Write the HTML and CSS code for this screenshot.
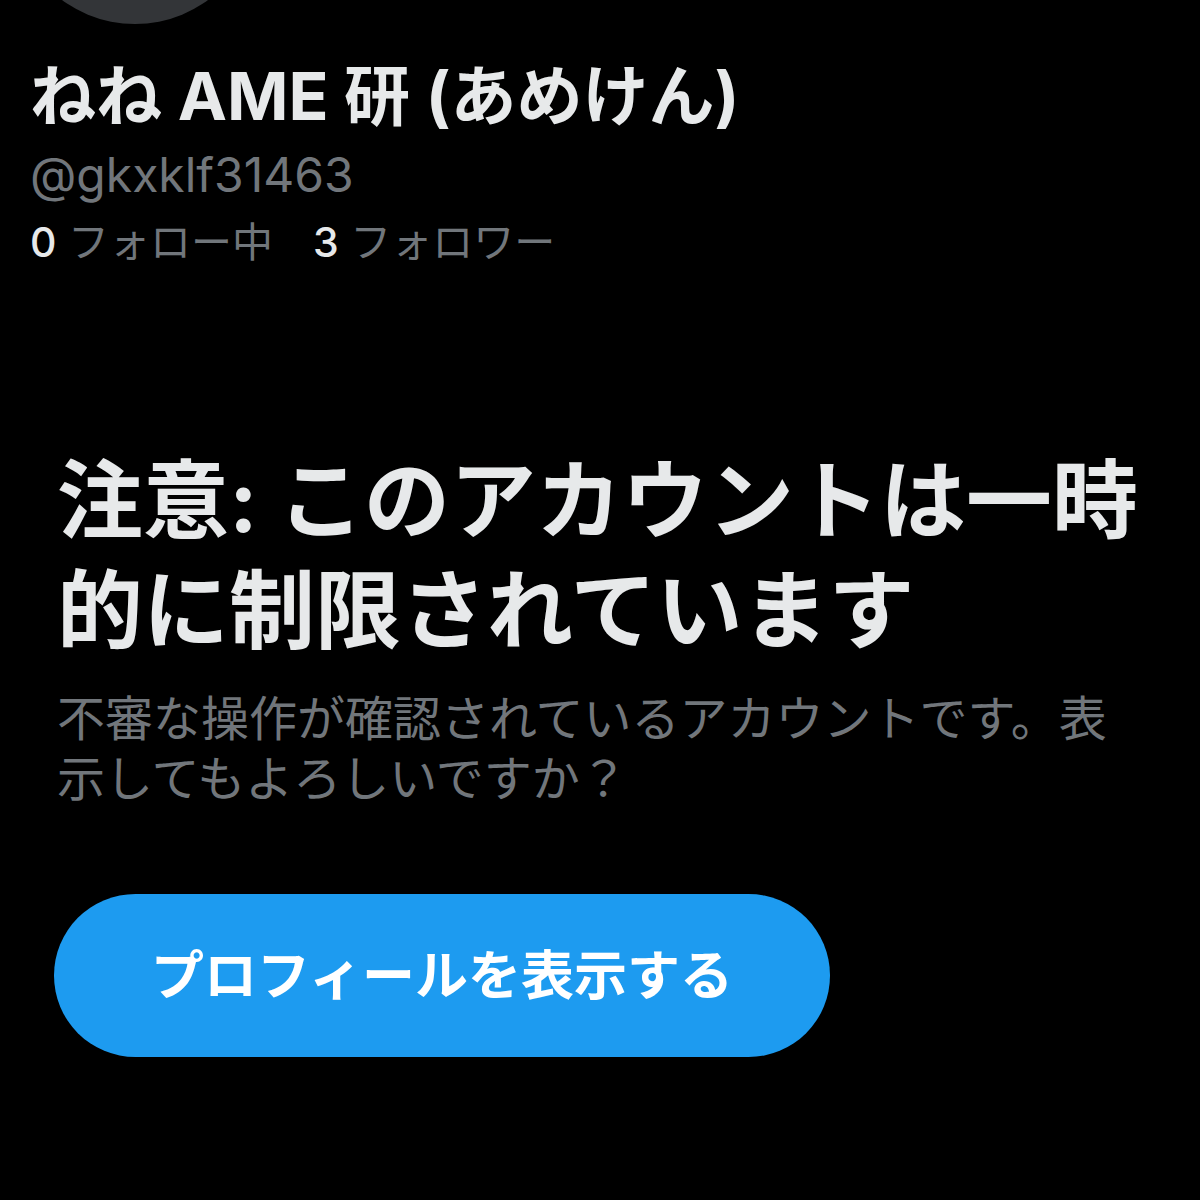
FILE: index.html
```html
<!DOCTYPE html>
<html lang="ja">
<head>
<meta charset="utf-8">
<link rel="stylesheet" href="styles.css">
</head>
<body>
<div class="page">
  <div class="avatar"></div>
  <div class="profile">
    <div class="name">ねね AME 研 (あめけん)</div>
    <div class="handle">@gkxklf31463</div>
    <div class="counts">
      <span class="count"><b>0</b> フォロー中</span>
      <span class="count"><b>3</b> フォロワー</span>
    </div>
  </div>
  <div class="notice">
    <h1 class="title">注意: このアカウントは一時<br>的に制限されています</h1>
    <p class="desc">不審な操作が確認されているアカウントです。表<br>示してもよろしいですか？</p>
    <button class="btn">プロフィールを表示する</button>
  </div>
</div>
</body>
</html>
```

FILE: styles.css
```css
html, body {
  margin: 0;
  padding: 0;
  background: #000;
}
body {
  width: 1200px;
  height: 1200px;
  overflow: hidden;
  font-family: "Inter", "Noto Sans CJK JP", sans-serif;
  color: #e7e9ea;
}
.page {
  display: flex;
  flex-direction: column;
}
.avatar {
  width: 246px;
  height: 246px;
  border-radius: 50%;
  background: #333538;
  margin: -222px 0 0 12px;
}
.profile {
  padding-left: 30px;
  display: flex;
  flex-direction: column;
}
.name {
  margin-top: 30px;
  font-size: 66px;
  font-weight: 700;
  line-height: 84px;
}
.handle {
  margin-top: 5px;
  font-size: 48px;
  line-height: 64px;
  color: #71767b;
}
.counts {
  margin-top: 5px;
  display: flex;
  gap: 40px;
  font-size: 41px;
  line-height: 60px;
  color: #71767b;
}
.count b {
  font-weight: 500;
  color: #e7e9ea;
}
.notice {
  padding-left: 57px;
  margin-top: 174px;
  display: flex;
  flex-direction: column;
  align-items: flex-start;
}
.title {
  margin: 0;
  font-size: 86px;
  font-weight: 700;
  line-height: 110px;
  white-space: nowrap;
}
.desc {
  margin: 23px 0 0;
  font-size: 48px;
  line-height: 60px;
  color: #71767b;
  white-space: nowrap;
}
.btn {
  margin: 85px 0 0 -3px;
  width: 776px;
  height: 163px;
  border: none;
  border-radius: 82px;
  background: #1d9bf0;
  color: #fff;
  font-family: "Noto Sans CJK JP", sans-serif;
  font-size: 53px;
  font-weight: 700;
  padding: 0 0 8px;
}
```
